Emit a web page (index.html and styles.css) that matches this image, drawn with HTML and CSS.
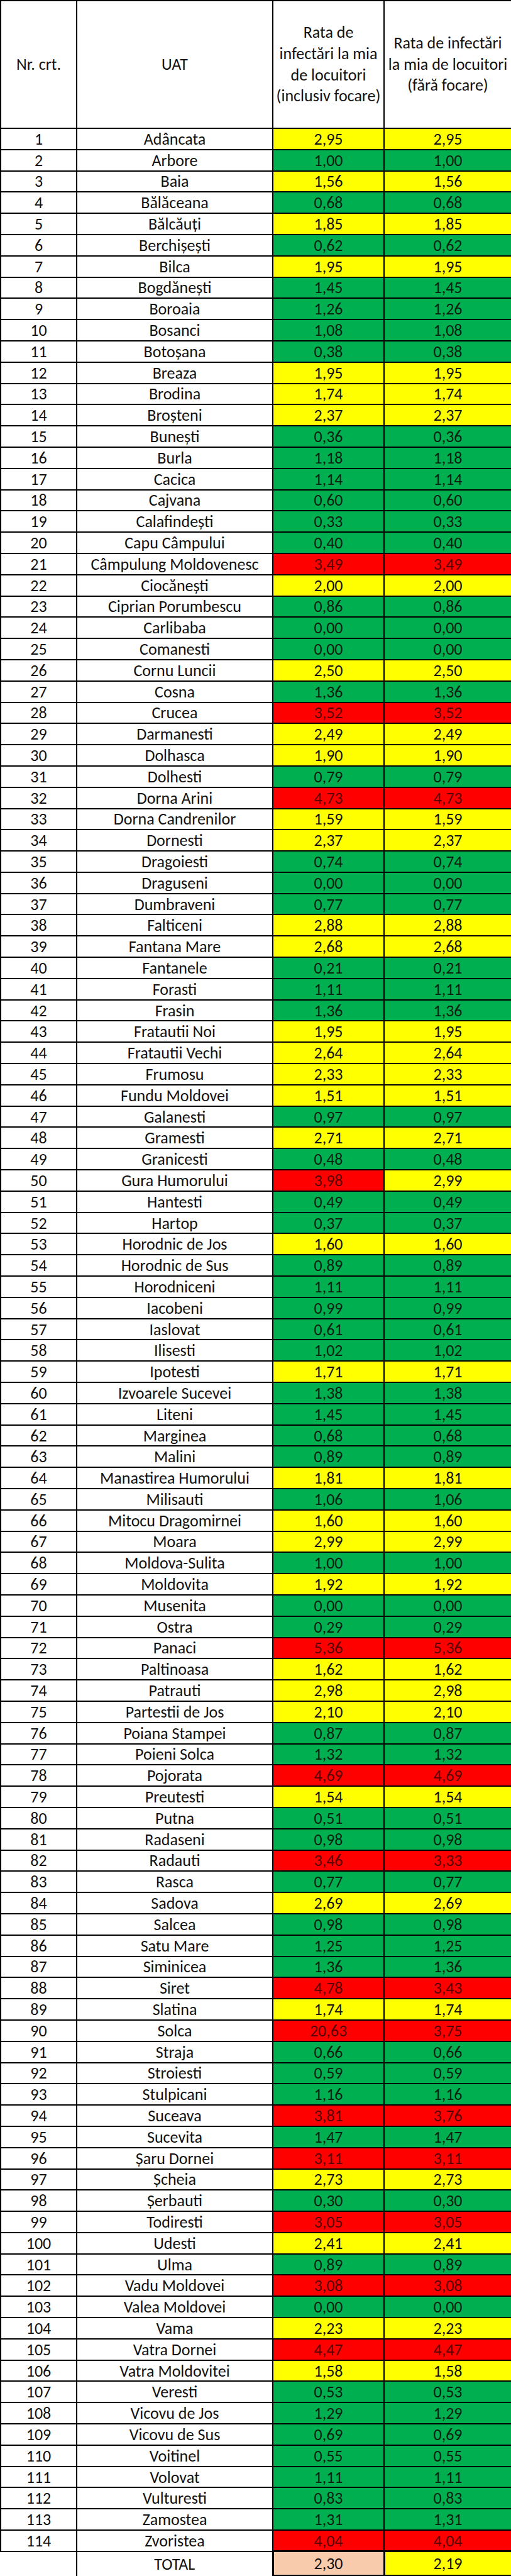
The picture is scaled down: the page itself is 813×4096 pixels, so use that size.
FILE: index.html
```html
<!DOCTYPE html>
<html lang="ro">
<head>
<meta charset="utf-8">
<title>Rata de infectări la mia de locuitori</title>
<link rel="stylesheet" href="styles.css">
</head>
<body>
<table class="rates">
<colgroup><col class="c-nr"><col class="c-uat"><col class="c-a"><col class="c-b"></colgroup>
<thead>
<tr><th>Nr. crt.</th><th>UAT</th><th>Rata de<br>infectări la mia<br>de locuitori<br>(inclusiv focare)</th><th>Rata de infectări<br>la mia de locuitori<br>(fără focare)</th></tr>
</thead>
<tbody>
<tr><td>1</td><td>Adâncata</td><td class="y">2,95</td><td class="y">2,95</td></tr>
<tr><td>2</td><td>Arbore</td><td class="g">1,00</td><td class="g">1,00</td></tr>
<tr><td>3</td><td>Baia</td><td class="y">1,56</td><td class="y">1,56</td></tr>
<tr><td>4</td><td>Bălăceana</td><td class="g">0,68</td><td class="g">0,68</td></tr>
<tr><td>5</td><td>Bălcăuți</td><td class="y">1,85</td><td class="y">1,85</td></tr>
<tr><td>6</td><td>Berchișești</td><td class="g">0,62</td><td class="g">0,62</td></tr>
<tr><td>7</td><td>Bilca</td><td class="y">1,95</td><td class="y">1,95</td></tr>
<tr><td>8</td><td>Bogdănești</td><td class="g">1,45</td><td class="g">1,45</td></tr>
<tr><td>9</td><td>Boroaia</td><td class="g">1,26</td><td class="g">1,26</td></tr>
<tr><td>10</td><td>Bosanci</td><td class="g">1,08</td><td class="g">1,08</td></tr>
<tr><td>11</td><td>Botoșana</td><td class="g">0,38</td><td class="g">0,38</td></tr>
<tr><td>12</td><td>Breaza</td><td class="y">1,95</td><td class="y">1,95</td></tr>
<tr><td>13</td><td>Brodina</td><td class="y">1,74</td><td class="y">1,74</td></tr>
<tr><td>14</td><td>Broșteni</td><td class="y">2,37</td><td class="y">2,37</td></tr>
<tr><td>15</td><td>Bunești</td><td class="g">0,36</td><td class="g">0,36</td></tr>
<tr><td>16</td><td>Burla</td><td class="g">1,18</td><td class="g">1,18</td></tr>
<tr><td>17</td><td>Cacica</td><td class="g">1,14</td><td class="g">1,14</td></tr>
<tr><td>18</td><td>Cajvana</td><td class="g">0,60</td><td class="g">0,60</td></tr>
<tr><td>19</td><td>Calafindești</td><td class="g">0,33</td><td class="g">0,33</td></tr>
<tr><td>20</td><td>Capu Câmpului</td><td class="g">0,40</td><td class="g">0,40</td></tr>
<tr><td>21</td><td>Câmpulung Moldovenesc</td><td class="r">3,49</td><td class="r">3,49</td></tr>
<tr><td>22</td><td>Ciocănești</td><td class="y">2,00</td><td class="y">2,00</td></tr>
<tr><td>23</td><td>Ciprian Porumbescu</td><td class="g">0,86</td><td class="g">0,86</td></tr>
<tr><td>24</td><td>Carlibaba</td><td class="g">0,00</td><td class="g">0,00</td></tr>
<tr><td>25</td><td>Comanesti</td><td class="g">0,00</td><td class="g">0,00</td></tr>
<tr><td>26</td><td>Cornu Luncii</td><td class="y">2,50</td><td class="y">2,50</td></tr>
<tr><td>27</td><td>Cosna</td><td class="g">1,36</td><td class="g">1,36</td></tr>
<tr><td>28</td><td>Crucea</td><td class="r">3,52</td><td class="r">3,52</td></tr>
<tr><td>29</td><td>Darmanesti</td><td class="y">2,49</td><td class="y">2,49</td></tr>
<tr><td>30</td><td>Dolhasca</td><td class="y">1,90</td><td class="y">1,90</td></tr>
<tr><td>31</td><td>Dolhesti</td><td class="g">0,79</td><td class="g">0,79</td></tr>
<tr><td>32</td><td>Dorna Arini</td><td class="r">4,73</td><td class="r">4,73</td></tr>
<tr><td>33</td><td>Dorna Candrenilor</td><td class="y">1,59</td><td class="y">1,59</td></tr>
<tr><td>34</td><td>Dornesti</td><td class="y">2,37</td><td class="y">2,37</td></tr>
<tr><td>35</td><td>Dragoiesti</td><td class="g">0,74</td><td class="g">0,74</td></tr>
<tr><td>36</td><td>Draguseni</td><td class="g">0,00</td><td class="g">0,00</td></tr>
<tr><td>37</td><td>Dumbraveni</td><td class="g">0,77</td><td class="g">0,77</td></tr>
<tr><td>38</td><td>Falticeni</td><td class="y">2,88</td><td class="y">2,88</td></tr>
<tr><td>39</td><td>Fantana Mare</td><td class="y">2,68</td><td class="y">2,68</td></tr>
<tr><td>40</td><td>Fantanele</td><td class="g">0,21</td><td class="g">0,21</td></tr>
<tr><td>41</td><td>Forasti</td><td class="g">1,11</td><td class="g">1,11</td></tr>
<tr><td>42</td><td>Frasin</td><td class="g">1,36</td><td class="g">1,36</td></tr>
<tr><td>43</td><td>Fratautii Noi</td><td class="y">1,95</td><td class="y">1,95</td></tr>
<tr><td>44</td><td>Fratautii Vechi</td><td class="y">2,64</td><td class="y">2,64</td></tr>
<tr><td>45</td><td>Frumosu</td><td class="y">2,33</td><td class="y">2,33</td></tr>
<tr><td>46</td><td>Fundu Moldovei</td><td class="y">1,51</td><td class="y">1,51</td></tr>
<tr><td>47</td><td>Galanesti</td><td class="g">0,97</td><td class="g">0,97</td></tr>
<tr><td>48</td><td>Gramesti</td><td class="y">2,71</td><td class="y">2,71</td></tr>
<tr><td>49</td><td>Granicesti</td><td class="g">0,48</td><td class="g">0,48</td></tr>
<tr><td>50</td><td>Gura Humorului</td><td class="r">3,98</td><td class="y">2,99</td></tr>
<tr><td>51</td><td>Hantesti</td><td class="g">0,49</td><td class="g">0,49</td></tr>
<tr><td>52</td><td>Hartop</td><td class="g">0,37</td><td class="g">0,37</td></tr>
<tr><td>53</td><td>Horodnic de Jos</td><td class="y">1,60</td><td class="y">1,60</td></tr>
<tr><td>54</td><td>Horodnic de Sus</td><td class="g">0,89</td><td class="g">0,89</td></tr>
<tr><td>55</td><td>Horodniceni</td><td class="g">1,11</td><td class="g">1,11</td></tr>
<tr><td>56</td><td>Iacobeni</td><td class="g">0,99</td><td class="g">0,99</td></tr>
<tr><td>57</td><td>Iaslovat</td><td class="g">0,61</td><td class="g">0,61</td></tr>
<tr><td>58</td><td>Ilisesti</td><td class="g">1,02</td><td class="g">1,02</td></tr>
<tr><td>59</td><td>Ipotesti</td><td class="y">1,71</td><td class="y">1,71</td></tr>
<tr><td>60</td><td>Izvoarele Sucevei</td><td class="g">1,38</td><td class="g">1,38</td></tr>
<tr><td>61</td><td>Liteni</td><td class="g">1,45</td><td class="g">1,45</td></tr>
<tr><td>62</td><td>Marginea</td><td class="g">0,68</td><td class="g">0,68</td></tr>
<tr><td>63</td><td>Malini</td><td class="g">0,89</td><td class="g">0,89</td></tr>
<tr><td>64</td><td>Manastirea Humorului</td><td class="y">1,81</td><td class="y">1,81</td></tr>
<tr><td>65</td><td>Milisauti</td><td class="g">1,06</td><td class="g">1,06</td></tr>
<tr><td>66</td><td>Mitocu Dragomirnei</td><td class="y">1,60</td><td class="y">1,60</td></tr>
<tr><td>67</td><td>Moara</td><td class="y">2,99</td><td class="y">2,99</td></tr>
<tr><td>68</td><td>Moldova-Sulita</td><td class="g">1,00</td><td class="g">1,00</td></tr>
<tr><td>69</td><td>Moldovita</td><td class="y">1,92</td><td class="y">1,92</td></tr>
<tr><td>70</td><td>Musenita</td><td class="g">0,00</td><td class="g">0,00</td></tr>
<tr><td>71</td><td>Ostra</td><td class="g">0,29</td><td class="g">0,29</td></tr>
<tr><td>72</td><td>Panaci</td><td class="r">5,36</td><td class="r">5,36</td></tr>
<tr><td>73</td><td>Paltinoasa</td><td class="y">1,62</td><td class="y">1,62</td></tr>
<tr><td>74</td><td>Patrauti</td><td class="y">2,98</td><td class="y">2,98</td></tr>
<tr><td>75</td><td>Partestii de Jos</td><td class="y">2,10</td><td class="y">2,10</td></tr>
<tr><td>76</td><td>Poiana Stampei</td><td class="g">0,87</td><td class="g">0,87</td></tr>
<tr><td>77</td><td>Poieni Solca</td><td class="g">1,32</td><td class="g">1,32</td></tr>
<tr><td>78</td><td>Pojorata</td><td class="r">4,69</td><td class="r">4,69</td></tr>
<tr><td>79</td><td>Preutesti</td><td class="y">1,54</td><td class="y">1,54</td></tr>
<tr><td>80</td><td>Putna</td><td class="g">0,51</td><td class="g">0,51</td></tr>
<tr><td>81</td><td>Radaseni</td><td class="g">0,98</td><td class="g">0,98</td></tr>
<tr><td>82</td><td>Radauti</td><td class="r">3,46</td><td class="r">3,33</td></tr>
<tr><td>83</td><td>Rasca</td><td class="g">0,77</td><td class="g">0,77</td></tr>
<tr><td>84</td><td>Sadova</td><td class="y">2,69</td><td class="y">2,69</td></tr>
<tr><td>85</td><td>Salcea</td><td class="g">0,98</td><td class="g">0,98</td></tr>
<tr><td>86</td><td>Satu Mare</td><td class="g">1,25</td><td class="g">1,25</td></tr>
<tr><td>87</td><td>Siminicea</td><td class="g">1,36</td><td class="g">1,36</td></tr>
<tr><td>88</td><td>Siret</td><td class="r">4,78</td><td class="r">3,43</td></tr>
<tr><td>89</td><td>Slatina</td><td class="y">1,74</td><td class="y">1,74</td></tr>
<tr><td>90</td><td>Solca</td><td class="r">20,63</td><td class="r">3,75</td></tr>
<tr><td>91</td><td>Straja</td><td class="g">0,66</td><td class="g">0,66</td></tr>
<tr><td>92</td><td>Stroiesti</td><td class="g">0,59</td><td class="g">0,59</td></tr>
<tr><td>93</td><td>Stulpicani</td><td class="g">1,16</td><td class="g">1,16</td></tr>
<tr><td>94</td><td>Suceava</td><td class="r">3,81</td><td class="r">3,76</td></tr>
<tr><td>95</td><td>Sucevita</td><td class="g">1,47</td><td class="g">1,47</td></tr>
<tr><td>96</td><td>Șaru Dornei</td><td class="r">3,11</td><td class="r">3,11</td></tr>
<tr><td>97</td><td>Șcheia</td><td class="y">2,73</td><td class="y">2,73</td></tr>
<tr><td>98</td><td>Șerbauti</td><td class="g">0,30</td><td class="g">0,30</td></tr>
<tr><td>99</td><td>Todiresti</td><td class="r">3,05</td><td class="r">3,05</td></tr>
<tr><td>100</td><td>Udesti</td><td class="y">2,41</td><td class="y">2,41</td></tr>
<tr><td>101</td><td>Ulma</td><td class="g">0,89</td><td class="g">0,89</td></tr>
<tr><td>102</td><td>Vadu Moldovei</td><td class="r">3,08</td><td class="r">3,08</td></tr>
<tr><td>103</td><td>Valea Moldovei</td><td class="g">0,00</td><td class="g">0,00</td></tr>
<tr><td>104</td><td>Vama</td><td class="y">2,23</td><td class="y">2,23</td></tr>
<tr><td>105</td><td>Vatra Dornei</td><td class="r">4,47</td><td class="r">4,47</td></tr>
<tr><td>106</td><td>Vatra Moldovitei</td><td class="y">1,58</td><td class="y">1,58</td></tr>
<tr><td>107</td><td>Veresti</td><td class="g">0,53</td><td class="g">0,53</td></tr>
<tr><td>108</td><td>Vicovu de Jos</td><td class="g">1,29</td><td class="g">1,29</td></tr>
<tr><td>109</td><td>Vicovu de Sus</td><td class="g">0,69</td><td class="g">0,69</td></tr>
<tr><td>110</td><td>Voitinel</td><td class="g">0,55</td><td class="g">0,55</td></tr>
<tr><td>111</td><td>Volovat</td><td class="g">1,11</td><td class="g">1,11</td></tr>
<tr><td>112</td><td>Vulturesti</td><td class="g">0,83</td><td class="g">0,83</td></tr>
<tr><td>113</td><td>Zamostea</td><td class="g">1,31</td><td class="g">1,31</td></tr>
<tr><td>114</td><td>Zvoristea</td><td class="r">4,04</td><td class="r">4,04</td></tr>
</tbody>
<tfoot>
<tr class="total"><td class="blank"></td><td class="total-label">TOTAL</td><td class="sum p">2,30</td><td class="sum y">2,19</td></tr>
</tfoot>
</table>
</body>
</html>
```
FILE: styles.css
```css
html, body {
  margin: 0;
  padding: 0;
  background: #ffffff;
}

body {
  font-family: Carlito, "Liberation Sans", Arial, sans-serif;
  color: #111111;
}

.rates {
  border-collapse: collapse;
  table-layout: fixed;
  width: 813px;
}

.c-nr { width: 121px; }
.c-uat { width: 312px; }
.c-a { width: 177px; }
.c-b { width: 203px; }

.rates th,
.rates td {
  border: 2px solid #000000;
  padding: 0;
  text-align: center;
  vertical-align: middle;
  white-space: nowrap;
  font-weight: normal;
  font-size: 26px;
  line-height: 1;
}

.rates thead tr {
  height: 203px;
}

.rates th {
  line-height: 33.9px;
}

.rates tbody tr {
  height: 33.8px;
}

.rates .y { background: #ffff00; }
.rates .g { background: #00b050; color: #0b1f10; }
.rates .r { background: #ff0000; color: #5a0000; }
.rates .p { background: #f8cbad; }

.rates .total {
  height: 39px;
}

.rates td.blank {
  border: none;
}

.rates td.total-label {
  border-bottom: none;
  border-right: none;
}

.rates td.sum {
  border: 3px solid #000000;
}
```
